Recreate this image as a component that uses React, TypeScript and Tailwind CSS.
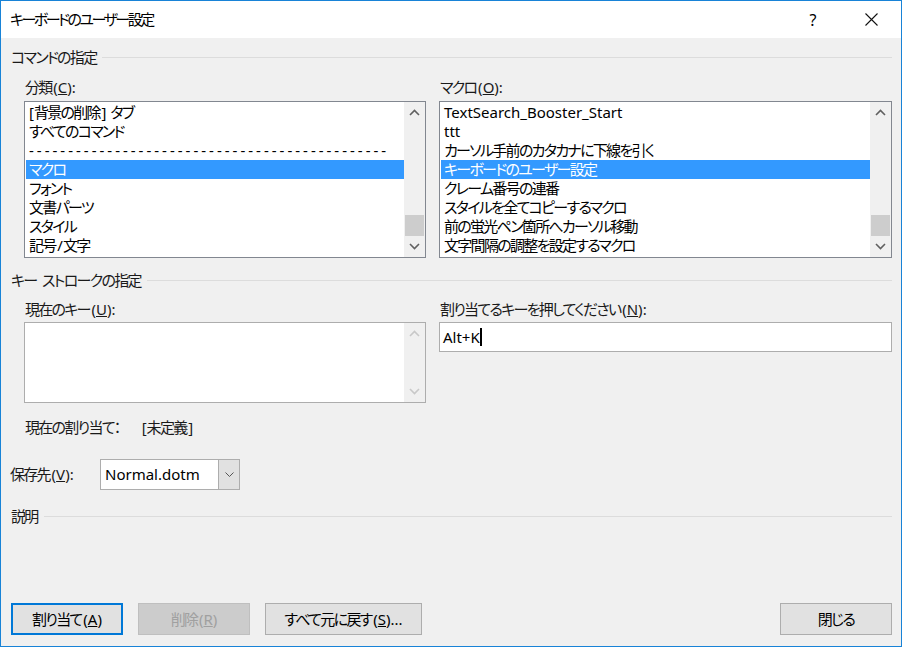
import React from 'react'

const font = "font-['Noto_Sans','Noto_Sans_CJK_JP',sans-serif] [font-feature-settings:'palt']"

// Latin runs keep normal spacing, the Japanese text is tightened like Yu Gothic UI.
// The margin gives back the negative tracking of the preceding kana.
const Lat = ({ children }: { children: React.ReactNode }) => <span className="tracking-normal ml-[1.7px]">{children}</span>
const LatRow = ({ children }: { children: React.ReactNode }) => <span className="tracking-normal">{children}</span>

// accelerator suffix like "(C):"
const Acc = ({ k, colon = true, dots = false }: { k: string; colon?: boolean; dots?: boolean }) => (
  <Lat>
    (<span className="underline">{k}</span>){colon ? ':' : ''}
    {dots ? '...' : ''}
  </Lat>
)

function Chevron({ dir, color = '#606060' }: { dir: 'up' | 'down'; color?: string }) {
  return (
    <svg width="11" height="7" viewBox="0 0 11 7" fill="none">
      {dir === 'up' ? (
        <path d="M1 6 L5.5 1.5 L10 6" stroke={color} strokeWidth="1.6" />
      ) : (
        <path d="M1 1 L5.5 5.5 L10 1" stroke={color} strokeWidth="1.6" />
      )}
    </svg>
  )
}

function ScrollBar({ thumb = true, disabled = false }: { thumb?: boolean; disabled?: boolean }) {
  const c = disabled ? '#c8c8c8' : '#606060'
  return (
    <div className="w-[21px] shrink-0 bg-[#f0f0f0] flex flex-col">
      <div className="h-[21px] flex items-center justify-center">
        <Chevron dir="up" color={c} />
      </div>
      <div className="flex-1 flex flex-col justify-end">
        {thumb && <div className="h-[21px] mx-[1px] bg-[#cdcdcd]" />}
      </div>
      <div className="h-[21px] flex items-center justify-center">
        <Chevron dir="down" color={c} />
      </div>
    </div>
  )
}

function ListBox({ items, selected }: { items: React.ReactNode[]; selected: number }) {
  return (
    <div className="h-[157px] border border-[#828790] bg-white flex">
      <div className="flex-1 pt-[1px] pl-[1px]">
        {items.map((t, i) => (
          <div
            key={i}
            className={`h-[19px] leading-[19px] pl-[3px] whitespace-nowrap overflow-hidden ${
              i === selected ? 'bg-[#3399ff] text-white' : 'text-black'
            }`}
          >
            {t}
          </div>
        ))}
      </div>
      <ScrollBar />
    </div>
  )
}

function SectionHeader({ children }: { children: React.ReactNode }) {
  return (
    <div className="h-5 flex items-center gap-[6px] pl-[1px]">
      <span className="whitespace-nowrap">{children}</span>
      <div className="flex-1 h-px bg-[#dcdcdc]" />
    </div>
  )
}

function Btn({ children, primary, disabled, w }: { children: React.ReactNode; primary?: boolean; disabled?: boolean; w: string }) {
  return (
    <button
      className={`${w} h-[32px] flex items-center justify-center ${
        primary
          ? 'border-2 border-[#0078d7] bg-[#e1e1e1] text-black'
          : disabled
          ? 'border border-[#bfbfbf] bg-[#cccccc] text-[#a0a0a0]'
          : 'border border-[#adadad] bg-[#e1e1e1] text-black'
      }`}
    >
      {children}
    </button>
  )
}

export default function App() {
  const left: React.ReactNode[] = [
    <>
      <LatRow>[</LatRow>背景の削除<Lat>] </Lat>タブ
    </>,
    'すべてのコマンド',
    <span className="tracking-[3px]">{'-'.repeat(46)}</span>,
    'マクロ',
    'フォント',
    '文書パーツ',
    'スタイル',
    <>
      記号<Lat>/</Lat>文字
    </>,
  ]
  const right: React.ReactNode[] = [
    <LatRow>TextSearch_Booster_Start</LatRow>,
    <LatRow>ttt</LatRow>,
    'カーソル手前のカタカナに下線を引く',
    'キーボードのユーザー設定',
    'クレーム番号の連番',
    'スタイルを全てコピーするマクロ',
    '前の蛍光ペン箇所へカーソル移動',
    '文字間隔の調整を設定するマクロ',
  ]

  return (
    <div className={`w-[902px] h-[647px] border border-[#1883d7] flex flex-col text-[15px] text-[#1a1a1a] tracking-[-1.7px] ${font}`}>
      {/* Title bar */}
      <div className="h-[37px] bg-white flex items-center pl-[9px]">
        <span className="flex-1 text-black tracking-[-2.5px]">キーボードのユーザー設定</span>
        <span className="w-[46px] mr-[12px] text-center text-[16px] text-black tracking-normal">?</span>
        <div className="w-[46px] h-full flex items-center justify-center mr-[7px]">
          <svg width="13" height="13" viewBox="0 0 13 13">
            <path d="M0.5 0.5 L12.5 12.5 M12.5 0.5 L0.5 12.5" stroke="#111" strokeWidth="1.1" />
          </svg>
        </div>
      </div>

      {/* Body */}
      <div className="flex-1 bg-[#f0f0f0] px-[9px] flex flex-col">
        <div className="mt-[9px]">
          <SectionHeader>コマンドの指定</SectionHeader>
        </div>

        <div className="grid grid-cols-[402px_453px] gap-x-[13px] pl-[14px] mt-[11px]">
          <div className="h-[18px] leading-[18px] pl-[1px]">
            分類<Acc k="C" />
          </div>
          <div className="h-[18px] leading-[18px] pl-[1px]">
            マクロ<Acc k="O" />
          </div>
          <div className="mt-[5px]">
            <ListBox items={left} selected={3} />
          </div>
          <div className="mt-[5px]">
            <ListBox items={right} selected={3} />
          </div>
        </div>

        <div className="mt-[12px]">
          <SectionHeader>
            キー<Lat> </Lat>ストロークの指定
          </SectionHeader>
        </div>

        <div className="grid grid-cols-[402px_453px] gap-x-[13px] pl-[14px] mt-[10px]">
          <div className="h-[18px] leading-[18px] pl-[1px]">
            現在のキー<Acc k="U" />
          </div>
          <div className="h-[18px] leading-[18px] pl-[1px]">
            割り当てるキーを押してください<Acc k="N" />
          </div>
          <div className="mt-[4px] h-[81px] border border-[#adadad] bg-white flex">
            <div className="flex-1" />
            <ScrollBar thumb={false} disabled />
          </div>
          <div className="mt-[4px]">
            <div className="h-[30px] border border-[#adadad] bg-white flex items-center pl-[3px] text-black">
              <LatRow>Alt+K</LatRow>
              <span className="w-[2px] h-[18px] bg-black" />
            </div>
          </div>
        </div>

        <div className="pl-[15px] mt-[15px] h-[18px] leading-[18px]">
          現在の割り当て：
          <span className="ml-[22px]">
            <LatRow>[</LatRow>未定義<Lat>]</Lat>
          </span>
        </div>

        <div className="mt-[23px] flex items-center">
          <span className="w-[90px]">
            保存先<Acc k="V" />
          </span>
          <div className="w-[140px] h-[31px] border border-[#adadad] bg-white flex">
            <div className="flex-1 flex items-center pl-[4px] text-black">
              <LatRow>Normal.dotm</LatRow>
            </div>
            <div className="w-[21px] bg-[#e1e1e1] border-l border-[#adadad] flex items-center justify-center">
              <svg width="9" height="5" viewBox="0 0 9 5" fill="none">
                <path d="M0.5 0.5 L4.5 4.5 L8.5 0.5" stroke="#555" strokeWidth="1" />
              </svg>
            </div>
          </div>
        </div>

        <div className="mt-[16px]">
          <SectionHeader>説明</SectionHeader>
        </div>

        <div className="mt-auto mb-[11px] flex items-center pl-[1px]">
          <Btn primary w="w-[112px]">
            割り当て<Acc k="A" colon={false} />
          </Btn>
          <div className="ml-[15px]">
            <Btn disabled w="w-[112px]">
              削除<Acc k="R" colon={false} />
            </Btn>
          </div>
          <div className="ml-[15px]">
            <Btn w="w-[157px]">
              すべて元に戻す<Acc k="S" colon={false} dots />
            </Btn>
          </div>
          <div className="ml-auto">
            <Btn w="w-[112px]">閉じる</Btn>
          </div>
        </div>
      </div>
    </div>
  )
}
